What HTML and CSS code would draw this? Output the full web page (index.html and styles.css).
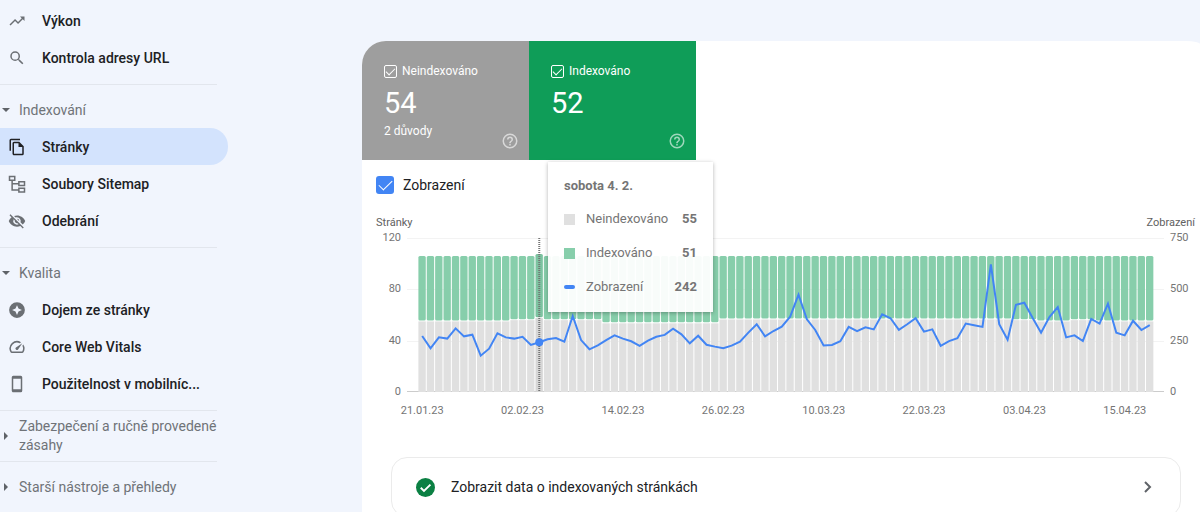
FILE: index.html
```html
<!DOCTYPE html>
<html lang="cs">
<head>
<meta charset="utf-8">
<title>Indexování stránek</title>
<link rel="stylesheet" href="styles.css">
</head>
<body>
<nav class="sidebar">
  <a class="item" href="#"><svg class="icon" viewBox="0 0 24 24"><path d="M16 6l2.290 2.290-4.880 4.880-4-4L2 16.590 3.410 18l6-6 4 4 6.300-6.290L22 12V6z"/></svg>Výkon</a>
  <a class="item" href="#"><svg class="icon" viewBox="0 0 24 24"><path d="M15.500 14h-.79l-.28-.27A6.470 6.470 0 0 0 16 9.500 6.500 6.500 0 1 0 9.500 16c1.610 0 3.090-.59 4.230-1.570l.27.28v.79l5 4.990L20.490 19zm-6 0a4.500 4.500 0 1 1 0-9 4.500 4.500 0 0 1 0 9z"/></svg>Kontrola adresy URL</a>
  <hr class="divider">
  <button class="group"><svg class="caret" viewBox="0 0 8 8"><path d="M0 2h8L4 6z"/></svg>Indexování</button>
  <a class="item item-active" href="#"><svg class="icon" viewBox="0 0 24 24"><path d="M16 1H4a2 2 0 0 0-2 2v14h2V3h12z"/><path fill-rule="evenodd" d="M15 5H8a2 2 0 0 0-2 2v14c0 1.100.9 2 2 2h11a2 2 0 0 0 2-2V11zM8 21V7h6v5h5v9z"/></svg>Stránky</a>
  <a class="item" href="#"><svg class="icon" viewBox="0 0 24 24"><g fill="none" stroke="currentColor" stroke-width="2"><path d="M2 2h7v5H2zM14.500 9h7.500v5h-7.500zM14.500 17.500h7.500v5h-7.500zM5.500 7v13h9M5.500 11.500h9"/></g></svg>Soubory Sitemap</a>
  <a class="item" href="#"><svg class="icon" viewBox="0 0 24 24"><path d="M12 7a5 5 0 0 1 4.640 6.830l2.920 2.920A11.800 11.800 0 0 0 22.990 12C21.260 7.610 16.990 4.500 12 4.500c-1.400 0-2.740.25-3.980.7l2.160 2.160C10.740 7.130 11.350 7 12 7zM2 4.270l2.280 2.280.46.460A11.800 11.800 0 0 0 1 12c1.730 4.390 6 7.500 11 7.500 1.550 0 3.030-.3 4.380-.84l.42.420L19.730 22 21 20.730 3.270 3zM7.530 9.800l1.550 1.550A3 3 0 0 0 12.650 14.920l1.550 1.550A5 5 0 0 1 7.530 9.800zm4.310-.78l3.150 3.150.02-.16a3 3 0 0 0-3-3z"/></svg>Odebrání</a>
  <hr class="divider">
  <button class="group"><svg class="caret" viewBox="0 0 8 8"><path d="M0 2h8L4 6z"/></svg>Kvalita</button>
  <a class="item" href="#"><svg class="icon" viewBox="0 0 24 24"><path fill-rule="evenodd" d="M12 1.500a10.500 10.500 0 1 0 0 21 10.500 10.500 0 0 0 0-21zM12 5.500l2 4.500 4.500 2-4.500 2-2 4.500-2-4.500-4.500-2 4.500-2z"/></svg>Dojem ze stránky</a>
  <a class="item" href="#"><svg class="icon" viewBox="0 0 24 24"><path d="M20.380 8.570l-1.230 1.850a8 8 0 0 1-.22 7.580H5.070A8 8 0 0 1 15.580 6.850l1.850-1.230A10 10 0 0 0 3.350 19a2 2 0 0 0 1.720 1h13.850a2 2 0 0 0 1.740-1 10 10 0 0 0-.27-10.440zM10.590 15.410a2 2 0 0 0 2.830 0l5.660-8.490-8.490 5.660a2 2 0 0 0 0 2.830z"/></svg>Core Web Vitals</a>
  <a class="item" href="#"><svg class="icon" viewBox="0 0 24 24"><path d="M17 1H7a2 2 0 0 0-2 2v18c0 1.100.9 2 2 2h10a2 2 0 0 0 2-2V3a2 2 0 0 0-2-2zm0 18H7V5h10z"/></svg>Použitelnost v mobilníc...</a>
  <hr class="divider">
  <button class="group group-long"><svg class="caret" viewBox="0 0 8 8"><path d="M2 0v8l4-4z"/></svg>Zabezpečení a ručně provedené zásahy</button>
  <hr class="divider">
  <button class="group"><svg class="caret" viewBox="0 0 8 8"><path d="M2 0v8l4-4z"/></svg>Starší nástroje a přehledy</button>
</nav>

<main class="panel">
  <div class="tiles">
    <section class="tile tile-gray">
      <label class="tile-label"><input class="tile-check" type="checkbox" checked>Neindexováno</label>
      <div class="tile-value">54</div>
      <div class="tile-note">2 důvody</div>
      <button class="help" aria-label="Nápověda"><svg viewBox="0 0 24 24"><path d="M11 18h2v-2h-2zm1-16a10 10 0 1 0 0 20 10 10 0 0 0 0-20zm0 18a8 8 0 1 1 0-16 8 8 0 0 1 0 16zm0-14a4 4 0 0 0-4 4h2a2 2 0 1 1 4 0c0 2-3 1.750-3 5h2c0-2.250 3-2.500 3-5a4 4 0 0 0-4-4z"/></svg></button>
    </section>
    <section class="tile tile-green">
      <label class="tile-label"><input class="tile-check" type="checkbox" checked>Indexováno</label>
      <div class="tile-value">52</div>
      <button class="help" aria-label="Nápověda"><svg viewBox="0 0 24 24"><path d="M11 18h2v-2h-2zm1-16a10 10 0 1 0 0 20 10 10 0 0 0 0-20zm0 18a8 8 0 1 1 0-16 8 8 0 0 1 0 16zm0-14a4 4 0 0 0-4 4h2a2 2 0 1 1 4 0c0 2-3 1.750-3 5h2c0-2.250 3-2.500 3-5a4 4 0 0 0-4-4z"/></svg></button>
    </section>
  </div>

  <label class="toggle"><input class="toggle-check" type="checkbox" checked>Zobrazení</label>

  <section class="chart">
    <div class="axis-titles"><span>Stránky</span><span>Zobrazení</span></div>
    <div class="chart-body">
      <div class="axis axis-left"><span>120</span><span>80</span><span>40</span><span>0</span></div>
      <div class="plot">
        <svg id="plot" class="plot-svg" viewBox="0 0 757 154" preserveAspectRatio="none" role="img" aria-label="Stránky a zobrazení"></svg>
        <div class="tooltip">
          <strong class="tooltip-title">sobota 4. 2.</strong>
          <div class="tooltip-row"><i class="swatch swatch-gray"></i><span>Neindexováno</span><b>55</b></div>
          <div class="tooltip-row"><i class="swatch swatch-green"></i><span>Indexováno</span><b>51</b></div>
          <div class="tooltip-row"><i class="swatch swatch-line"></i><span>Zobrazení</span><b>242</b></div>
        </div>
      </div>
      <div class="axis axis-right"><span>750</span><span>500</span><span>250</span><span>0</span></div>
    </div>
    <div class="dates"><span>21.01.23</span><span>02.02.23</span><span>14.02.23</span><span>26.02.23</span><span>10.03.23</span><span>22.03.23</span><span>03.04.23</span><span>15.04.23</span></div>
  </section>

  <a class="link-card" href="#">
    <svg class="link-check" viewBox="0 0 20 20"><circle cx="10" cy="10" r="10" fill="#0b8043"/><path d="M5 10.300l3.400 3.400L15.200 7" fill="none" stroke="#fff" stroke-width="2"/></svg>
    <span class="link-text">Zobrazit data o indexovaných stránkách</span>
    <svg class="chevron" viewBox="0 0 12 12"><path d="M3 1l5 5-5 5" fill="none" stroke="#5f6368" stroke-width="2"/></svg>
  </a>
</main>
<script src="chart.js"></script>
</body>
</html>
```
FILE: styles.css
```css
* { box-sizing: border-box; }

body {
  margin: 0;
  height: 100vh;
  overflow: hidden;
  display: flex;
  align-items: stretch;
  background: #f1f5fd;
  color: #202124;
  font-family: Roboto, "Liberation Sans", sans-serif;
}

button {
  border: 0;
  padding: 0;
  background: none;
  font: inherit;
  color: inherit;
  text-align: left;
}

a { color: inherit; text-decoration: none; }

/* Sidebar */
.sidebar {
  flex: 0 0 228px;
  padding-top: 2px;
}

.item {
  display: flex;
  align-items: center;
  gap: 16px;
  height: 37px;
  padding-left: 8px;
  border-radius: 0 18px 18px 0;
  font-size: 14px;
  font-weight: 500;
  white-space: nowrap;
}

.item-active { background: #d3e3fd; }

.icon {
  width: 18px;
  height: 18px;
  flex: none;
  fill: #6b6f74;
  color: #6b6f74;
}

.item-active .icon { fill: #202124; }

.divider {
  height: 1px;
  margin: 8px 11px 7px 0;
  border: 0;
  background: #e2e6ed;
}

.group {
  display: flex;
  align-items: center;
  gap: 9px;
  width: 100%;
  height: 36px;
  padding-left: 2px;
  font-size: 14px;
  line-height: 19px;
  color: #6f7378;
}

.group-long { height: 35px; }

.caret {
  width: 8px;
  height: 8px;
  flex: none;
  fill: #5f6368;
}

/* Main panel */
.panel {
  flex: 1;
  min-width: 0;
  margin: 41px 0 0 134px;
  border-radius: 24px 14px 0 0 / 24px 3px 0 0;
  overflow: hidden;
  background: #fff;
}

.tiles { display: flex; }

.tile {
  position: relative;
  width: 167px;
  height: 119px;
  padding: 22px;
  color: #fff;
}

.tile-gray { background: #9e9e9e; }
.tile-green { background: #0f9d58; }

.tile-label {
  display: flex;
  align-items: center;
  gap: 5px;
  font-size: 12px;
  line-height: 17px;
}

.tile-check {
  appearance: none;
  width: 13px;
  height: 13px;
  margin: 0;
  border: 1px solid #fff;
  border-radius: 2px;
  display: grid;
  place-items: center;
}

.tile-check::after,
.toggle-check::after {
  content: "";
  width: 8px;
  height: 4px;
  border-left: 1px solid #fff;
  border-bottom: 1px solid #fff;
  transform: rotate(-45deg);
  margin-bottom: 3px;
}

.tile-value {
  margin-top: 5px;
  font-size: 29px;
  line-height: 36px;
}

.tile-note {
  margin-top: 2px;
  font-size: 12px;
  line-height: 16px;
}

.help {
  position: absolute;
  right: 10px;
  bottom: 10px;
  width: 18px;
  height: 18px;
  opacity: .6;
}

.help svg { display: block; fill: #fff; }

.toggle {
  display: flex;
  align-items: center;
  gap: 9px;
  width: fit-content;
  margin: 15px 0 0 14px;
  font-size: 14px;
  line-height: 20px;
}

.toggle-check {
  appearance: none;
  width: 18px;
  height: 18px;
  margin: 0;
  border-radius: 3px;
  background: #4285f4;
  display: grid;
  place-items: center;
}

.toggle-check::after { width: 12px; height: 6px; }

/* Chart */
.chart {
  margin-top: 20px;
  font-size: 11px;
  line-height: 16px;
  color: #757575;
}

.axis-titles {
  display: flex;
  justify-content: space-between;
  padding: 0 5px 0 14px;
  color: #616161;
}

.chart-body {
  display: flex;
  height: 154px;
  margin-top: 7px;
}

.axis {
  display: flex;
  flex-direction: column;
  justify-content: space-between;
  margin: -8px 0;
}

.axis-left { width: 45px; padding-right: 6px; text-align: right; }
.axis-right { width: 36px; padding-left: 6px; }

.plot {
  position: relative;
  flex: 1;
}

.plot-svg {
  display: block;
  width: 100%;
  height: 100%;
  overflow: visible;
}

.grid-line { fill: #f3f3f3; }
.base-line { fill: #cccccc; }
.bar-gray { fill: #e0e0e0; }
.bar-green { fill: #87ceab; }
.bar-gray-hover { fill: #d6d6d6; }
.bar-green-hover { fill: #7cc3a0; }

.marker {
  stroke: #757575;
  stroke-width: 2;
  stroke-dasharray: 1 1;
}

.views {
  fill: none;
  stroke: #4285f4;
  stroke-width: 2;
  vector-effect: non-scaling-stroke;
}

.point { fill: #4285f4; }

.tooltip {
  position: absolute;
  left: 141px;
  top: -76px;
  width: 165px;
  padding: 15px 16px;
  background: rgba(255, 255, 255, .94);
  box-shadow: 0 1px 4px rgba(0, 0, 0, .3);
  font-size: 13px;
  line-height: 20px;
}

.tooltip-title { display: block; line-height: 18px; }

.tooltip-row {
  display: flex;
  align-items: center;
  margin-top: 14px;
}

.tooltip-row b { margin-left: auto; }

.swatch {
  width: 11px;
  height: 11px;
  margin-right: 11px;
}

.swatch-gray { background: #e0e0e0; }
.swatch-green { background: #87ceab; }
.swatch-line { height: 4px; border-radius: 2px; background: #4285f4; }

.dates {
  display: grid;
  grid-template-columns: repeat(8, 1fr);
  margin: 11px 25px 0 10px;
  text-align: center;
}

/* Link card */
.link-card {
  display: flex;
  align-items: center;
  height: 60px;
  margin: 38px 19px 0 29px;
  padding: 0 26px 0 24px;
  border: 1px solid #ebebeb;
  border-radius: 16px;
  font-size: 14px;
}

.link-check { width: 19px; height: 19px; }
.link-text { flex: 1; margin-left: 16px; }
.chevron { width: 12px; height: 12px; }
```
FILE: chart.js
```js
const HEIGHT = 154;
const STEP = 8.363;
const START = 11;
const TOTAL = 106;
const SELECTED = 14;

// Runs of days sharing one count of pages outside the index: [days, count].
const runs = [[11, 55], [11, 56], [14, 53.5], [35, 56.5], [3, 56], [4, 55], [3, 56], [7, 55]];
const notIndexed = runs.flatMap(([days, count]) => Array(days).fill(count));

const views = [
  273, 213, 266, 260, 310, 271, 279, 177, 211, 286, 266, 260, 269, 229, 242, 257, 263, 245, 370, 253,
  208, 227, 253, 276, 260, 247, 225, 250, 269, 278, 308, 281, 237, 274, 230, 221, 213, 226, 245, 289,
  330, 271, 297, 318, 367, 474, 354, 302, 227, 229, 247, 317, 296, 315, 305, 378, 359, 303, 330, 359,
  294, 305, 225, 248, 262, 333, 325, 317, 622, 330, 255, 425, 435, 360, 289, 365, 414, 266, 276, 248,
  356, 333, 430, 289, 276, 347, 302, 326
];

const pageY = (n) => HEIGHT - n * HEIGHT / 120;
const viewY = (n) => HEIGHT - n * HEIGHT / 750;
const midX = (i) => START + STEP * i + STEP / 2;
const rect = (cls, x, y, w, h, r = 0) =>
  `<rect class="${cls}" x="${x}" y="${y}" width="${w}" height="${h}" rx="${r}"/>`;

let out = "";
for (const n of [40, 80, 120]) out += rect("grid-line", 0, Math.round(pageY(n)), 757, 1);
out += rect("base-line", 0, HEIGHT - 1, 757, 1);

notIndexed.forEach((count, i) => {
  const on = i === SELECTED;
  const grow = on ? 2 : 0;
  const x = START + STEP * i + 0.4;
  const top = pageY(TOTAL) - grow;
  const split = pageY(count) - grow;
  const w = STEP - 1;
  out += rect(on ? "bar-green-hover" : "bar-green", x, top, w, split - top - 1, 1.5);
  out += rect(on ? "bar-gray-hover" : "bar-gray", x, split, w, HEIGHT - split);
});

const mark = midX(SELECTED);
out += `<line class="marker" x1="${mark}" x2="${mark}" y1="0" y2="${HEIGHT}"/>`;
out += `<polyline class="views" points="${views.map((v, i) => `${midX(i)},${viewY(v)}`).join(" ")}"/>`;
out += `<circle class="point" cx="${mark}" cy="${viewY(views[SELECTED])}" r="4"/>`;
document.getElementById("plot").innerHTML = out;
```
